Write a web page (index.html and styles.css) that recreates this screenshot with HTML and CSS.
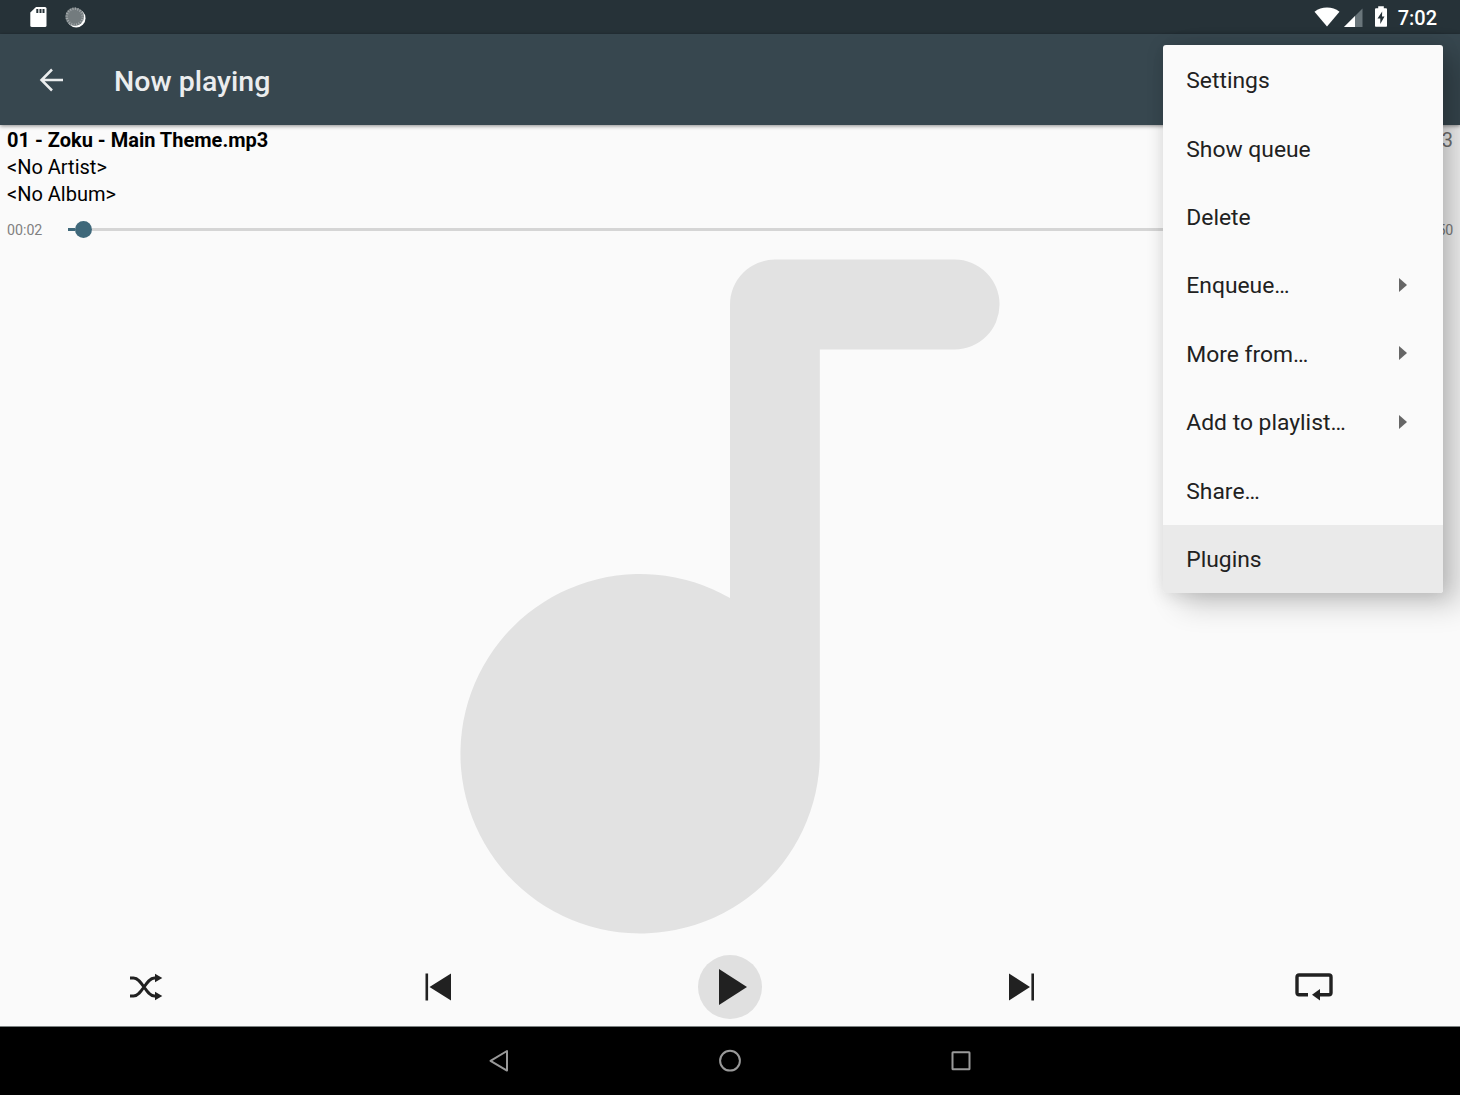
FILE: index.html
```html
<!DOCTYPE html>
<html lang="en">
<head>
<meta charset="utf-8">
<title>Now playing</title>
<link rel="stylesheet" href="styles.css">
</head>
<body>
<div class="screen">
  <header class="status-bar">
    <div class="status-left">
      <svg class="icon-sd" width="17" height="21" viewBox="0 0 17 21"><path fill="#fff" d="M6 1h9Q16.500 1 16.500 2.500v17q0 1.500-1.500 1.500H2Q.3 21 .3 19.500V6.500z"/><path d="M7.300 3v4M10.500 3v4M13.500 3v4" stroke="#263238" stroke-width="2"/></svg>
      <svg class="icon-sync" width="22" height="22" viewBox="0 0 22 22"><circle cx="11.200" cy="11.200" r="9.300" fill="#fff"/><circle cx="9.700" cy="9.700" r="9.300" fill="#737b7e"/><circle cx="9.700" cy="9.700" r="8" fill="none" stroke="#a4aaac" stroke-width="2.500" stroke-dasharray="1 1.513"/></svg>
    </div>
    <div class="status-right">
      <svg class="icon-wifi" width="26" height="20" viewBox="0 0 26 20"><path fill="#fff" d="M.5 4.700Q6 .5 13 .5T25.500 4.700L13 19.500z"/></svg>
      <svg class="icon-cell" width="19" height="19" viewBox="0 0 19 19"><path fill="#69757a" d="M18.500.5V19H0z"/><path fill="#fff" d="M11 8v11H0z"/></svg>
      <svg class="icon-battery" width="12" height="21" viewBox="0 0 12 21"><path fill="#fff" d="M3.200.3h5.600v2H11q1 0 1 1V20q0 .8-.8.8H.8Q0 20.800 0 20V3.300q0-1 1-1h2.200z"/><path fill="#263238" d="M7.200 5.500 2.500 12.500h2.800V18L9.500 10.500H7z"/></svg>
      <span class="clock">7:02</span>
    </div>
  </header>
  <div class="toolbar">
    <svg width="24" height="24" viewBox="0 0 24 24"><path d="M13 1.500 2.500 12l10.500 10.500M2.700 12H24" fill="none" stroke="#ebedee" stroke-width="2.500"/></svg>
    <h1 class="title">Now playing</h1>
  </div>
  <main class="player">
    <section class="track">
      <div class="track-row"><b>01 - Zoku - Main Theme.mp3</b><span class="position">1/13</span></div>
      <div class="track-row">&lt;No Artist&gt;</div>
      <div class="track-row">&lt;No Album&gt;</div>
    </section>
    <div class="seek">
      <span class="time">00:02</span>
      <div class="seek-track"><div class="seek-fill"></div><div class="seek-thumb"></div><div class="seek-rest"></div></div>
      <span class="time">03:50</span>
    </div>
    <div class="art">
      <svg width="540" height="675" viewBox="-.01 -.01 12.020 15.020"><path fill="#e2e2e2" d="M7 0h4a1 1 0 0 1 0 2H8v9a4 4 0 1 1-2-3.464V1a1 1 0 0 1 1-1z"/></svg>
    </div>
    <div class="controls">
      <div class="control"><svg width="34" height="28" viewBox="0 0 34 28"><g fill="none" stroke="#212121" stroke-width="3"><path d="M1 5h3.500C13 5 17 23 25.500 23H28M1 23h3.500C13 23 17 5 25.500 5H28"/></g><path fill="#212121" d="M26 .8 33.300 5 26 9.200zM26 18.800 33.300 23 26 27.200z"/></svg></div>
      <div class="control"><svg width="27" height="28" viewBox="0 0 27 28"><path fill="#212121" d="M.5.500h2.600v27H.5zM26 .5v27L4.500 14z"/></svg></div>
      <div class="control play-control"><div class="play"><svg width="28" height="36" viewBox="0 0 28 36"><path fill="#212121" d="M0 0l28 18L0 36z"/></svg></div></div>
      <div class="control next-control"><svg width="27" height="28" viewBox="0 0 27 28"><path fill="#212121" d="M23.400.500h2.600v27h-2.600zM1 .5v27L22 14z"/></svg></div>
      <div class="control"><svg width="38" height="28" viewBox="0 0 38 28"><path d="M13 21.800H4q-2 0-2-2V4q0-2 2-2h30q2 0 2 2v15.800q0 2-2 2H23" fill="none" stroke="#212121" stroke-width="3.400"/><path fill="#212121" d="M17 21.800 25 16v11.600z"/></svg></div>
    </div>
  </main>
  <nav class="nav-bar">
    <svg width="20" height="24" viewBox="0 0 20 24"><path d="M18 2v19.600L1.500 11.800z" fill="none" stroke="#999" stroke-width="2" stroke-linejoin="round"/></svg>
    <svg width="24" height="24" viewBox="0 0 24 24"><circle cx="12" cy="11.700" r="9.900" fill="none" stroke="#999" stroke-width="2"/></svg>
    <svg width="20" height="20" viewBox="0 0 20 20"><rect x="1.500" y="1.200" width="17" height="17" rx=".5" fill="none" stroke="#999" stroke-width="2"/></svg>
  </nav>
  <div class="menu">
    <div class="item">Settings</div>
    <div class="item">Show queue</div>
    <div class="item">Delete</div>
    <div class="item">Enqueue…<i class="arrow"></i></div>
    <div class="item">More from…<i class="arrow"></i></div>
    <div class="item">Add to playlist…<i class="arrow"></i></div>
    <div class="item">Share…</div>
    <div class="item selected">Plugins</div>
  </div>
</div>
</body>
</html>
```
FILE: styles.css
```css
* { box-sizing: border-box; }
body { margin: 0; font-family: Roboto, "Liberation Sans", sans-serif; }
svg { display: block; flex: none; }

.screen {
  position: relative;
  width: 1460px;
  height: 1095px;
  display: flex;
  flex-direction: column;
  overflow: hidden;
  background: #fafafa;
}

.status-bar {
  height: 34px;
  display: flex;
  justify-content: space-between;
  padding: 0 23px 0 30px;
  background: #263238;
}
.status-left, .status-right { display: flex; align-items: flex-start; }
.icon-sd { margin-top: 6px; }
.icon-sync { margin: 7px 0 0 18px; }
.icon-wifi { margin-top: 7px; }
.icon-cell { margin: 8px 0 0 4px; }
.icon-battery { margin: 6px 0 0 12px; }
.clock { margin-left: 11px; color: #fff; font-size: 20px; font-weight: 500; line-height: 36px; }

.toolbar {
  position: relative;
  height: 91px;
  display: flex;
  align-items: center;
  gap: 51px;
  padding-left: 39px;
  background: #37474f;
  box-shadow: 0 1px 4px rgba(0, 0, 0, .45);
}
.title { margin: 5px 0 0; color: #ebedee; font-size: 28.5px; font-weight: 500; line-height: 34px; }

.player { height: 901px; display: flex; flex-direction: column; }
.track { padding: 2px 7px 0 7px; color: #000; font-size: 20px; }
.track-row { height: 27px; display: flex; justify-content: space-between; line-height: 27px; white-space: nowrap; }
.position { color: #757575; }

.seek { height: 44px; display: flex; align-items: center; padding: 0 7px; }
.time { width: 35px; color: #808080; font-size: 14.2px; }
.seek-track { flex: 1; display: flex; align-items: center; margin: 0 26px; padding-bottom: 1px; }
.seek-fill { width: 7px; height: 3px; background: #3f687a; }
.seek-thumb { width: 17px; height: 17px; border-radius: 50%; background: #3f687a; }
.seek-rest { flex: 1; height: 3px; background: #d5d5d5; }

.art { height: 694px; display: flex; justify-content: center; padding-top: 7px; }
.controls { height: 80px; display: flex; padding-top: 1px; }
.control { width: 20%; display: flex; align-items: center; justify-content: center; }
.play-control { padding-right: 1px; }
.next-control { padding-right: 2px; }
.play {
  width: 64px;
  height: 64px;
  display: flex;
  align-items: center;
  justify-content: center;
  padding-left: 7px;
  border-radius: 50%;
  background: #e0e0e0;
}

.nav-bar {
  height: 69px;
  display: flex;
  align-items: center;
  justify-content: center;
  gap: 209px;
  border-top: 1px solid #7c8282;
  background: #000;
}

.menu {
  position: absolute;
  top: 45.400px;
  left: 1163.300px;
  width: 279.700px;
  height: 547.600px;
  display: flex;
  flex-direction: column;
  border-radius: 3px;
  background: #fafafa;
  box-shadow: 18px 11px 30px rgba(0, 0, 0, .2), 0 2px 18px rgba(0, 0, 0, .13);
}
.item {
  flex: 1;
  display: flex;
  align-items: center;
  justify-content: space-between;
  padding: 2px 36px 0 23px;
  color: #212121;
  font-size: 22.85px;
}
.selected { border-radius: 0 0 3px 3px; background: #eaeaea; }
.arrow {
  border: solid transparent;
  border-width: 7px 0 7px 8px;
  border-left-color: #666;
  margin-top: -2px;
}
```
